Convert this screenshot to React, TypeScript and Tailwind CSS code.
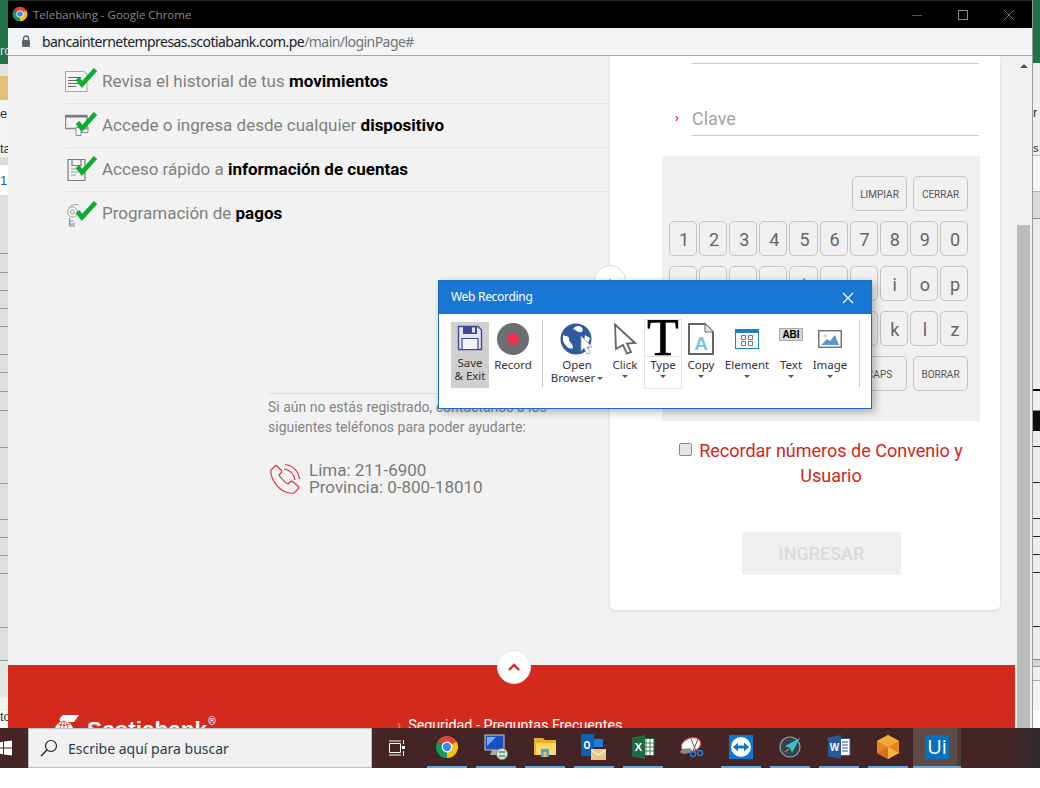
import React from "react";

const Chrome = ({ s }: { s: number }) => (
  <svg width={s} height={s} viewBox="0 0 24 24">
    <path d="M12 12L2.47 6.5A11 11 0 0 1 21.53 6.5Z" fill="#db4437" />
    <path d="M12 12L21.53 6.5A11 11 0 0 1 12 23Z" fill="#f4c20d" />
    <path d="M12 12L12 23A11 11 0 0 1 2.47 6.5Z" fill="#0f9d58" />
    <circle cx="12" cy="12" r="5.4" fill="#fff" />
    <circle cx="12" cy="12" r="4.2" fill="#4285f4" />
  </svg>
);

const Check = () => (
  <path d="M12.500 10.500 L17 16.500 L30.500 1.500" fill="none" stroke="#0aad2e" strokeWidth="4.6" strokeLinejoin="miter" />
);

const ListIcon = ({ n }: { n: number }) => (
  <svg width="33" height="26" viewBox="0 0 33 26" className="shrink-0 mt-[-1px]">
    {n === 0 && (
      <g fill="none" stroke="#8d8d8d" strokeWidth="1">
        <path d="M0.500 3.500H19L22 6V23.500H0.500Z" fill="#f5f5f5" stroke="#b5a68e" />
        <path d="M3 9.500H16M3 12.500H16M3 15.500H14M3 18.500H11" stroke="#666" />
      </g>
    )}
    {n === 1 && (
      <g fill="none" stroke="#8d8d8d" strokeWidth="1">
        <path d="M0.500 3.500H22V16.500H0.500Z" strokeWidth="1.400" />
        <path d="M0.500 4.500H22" stroke="#777" strokeWidth="2" />
        <path d="M11 15.500V23.500H16V15.500Z" fill="#f5f5f5" />
        <path d="M16 20.500H23V15" />
      </g>
    )}
    {n === 2 && (
      <g fill="none" stroke="#807a72" strokeWidth="1.200">
        <path d="M3 3.500H20V24.500H3Z" fill="#f1f1f1" />
        <path d="M7 3.500V9.500H16V3.500" />
        <path d="M6 13H15M6 16H13M6 19H11" stroke="#999" />
      </g>
    )}
    {n === 3 && (
      <g fill="none" stroke="#a9a29a" strokeWidth="1">
        <circle cx="7.500" cy="11" r="5" />
        <path d="M3.500 7Q8 2 14 4" />
        <circle cx="7.500" cy="11" r="2" />
        <path d="M4.500 17V25H10M4.500 20H8.500M4.500 23H10" stroke="#8a8a8a" />
      </g>
    )}
    <Check />
  </svg>
);

const Caret = ({ className = "" }: { className?: string }) => (
  <span className={`inline-block w-0 h-0 border-x-[3px] border-x-transparent border-t-[3px] border-t-[#555] ${className}`} />
);

const RibbonItem = ({
  w,
  icon,
  label,
  caret = true,
  extra = "",
}: {
  w: string;
  icon: React.ReactNode;
  label: React.ReactNode;
  caret?: boolean;
  extra?: string;
}) => (
  <div className={`flex flex-col items-center shrink-0 ${w} ${extra}`}>
    <div className="h-[37px] flex items-center justify-center">{icon}</div>
    <div className="text-center leading-[13px] mt-[1px] whitespace-nowrap">{label}</div>
    {caret && <Caret className="mt-[4px]" />}
  </div>
);

const Key = ({ c }: { c: string }) => (
  <div className="h-[35px] pt-px pl-[2px] flex items-center justify-center rounded-[5px] border border-[#c4c4c4] text-[#666] text-[18px]">
    {c}
  </div>
);

const WideKey = ({ c }: { c: string }) => (
  <div className="w-[55px] h-[35px] pt-[2px] flex items-center justify-center rounded-[5px] border border-[#c4c4c4] text-[#555] text-[10px]">
    {c}
  </div>
);

const LEFT_ROWS = [
  "h-[64px] bg-[#217346]",
  "h-[12px] bg-[#e4e4e4]",
  "h-[24px] bg-[#e3bf78]",
  "h-[57px] bg-[#f4f4f4]",
  "h-[8px] bg-[#dcdcdc]",
  "h-[30px] bg-white",
  "h-[59px] bg-[#dedede] border-b border-[#999]",
  "h-[19px] bg-[#dedede] border-b border-[#999]",
  "h-[18px] bg-[#dedede] border-b border-[#999]",
  "h-[18px] bg-[#dedede] border-b border-[#999]",
  "h-[18px] bg-[#dedede] border-b border-[#999]",
  "h-[28px] bg-[#dedede] border-b border-[#999]",
  "h-[18px] bg-[#dedede] border-b border-[#999]",
  "h-[19px] bg-[#dedede] border-b border-[#999]",
  "h-[19px] bg-[#dedede] border-b border-[#999]",
  "h-[37px] bg-[#dedede] border-b border-[#999]",
  "h-[36px] bg-[#dedede] border-b border-[#999]",
  "h-[36px] bg-[#dedede] border-b border-[#999]",
  "h-[18px] bg-[#dedede] border-b border-[#999]",
  "h-[18px] bg-[#dedede] border-b border-[#999]",
  "h-[18px] bg-[#dedede] border-b border-[#999]",
  "h-[54px] bg-[#dedede] border-b border-[#999]",
  "h-[33px] bg-[#dedede] border-b border-[#999]",
  "h-[37px] bg-[#e6e6e6]",
  "h-[13px] bg-[#f3f3f3]",
];

const RIGHT_ROWS = [
  "h-[63px] bg-[#217346]",
  "h-[93px] bg-[#efefef] border-b border-[#b5b5b5]",
  "h-[36px] bg-[#f5f5f5] border-b border-[#b5b5b5]",
  "h-[27px] bg-[#dcdcdc] border-b border-[#888]",
  "h-[172px] bg-[#ececec] border-b-2 border-black",
  "h-[20px] bg-[#f0f0f0] border-b border-[#888]",
  "h-[20px] bg-[#0c0c0c]",
  "h-[16px] bg-[#ececec] border-b border-[#222]",
  "h-[36px] bg-[#ececec] border-b border-[#222]",
  "h-[36px] bg-[#ececec] border-b border-[#222]",
  "h-[18px] bg-[#ececec] border-b border-[#222]",
  "h-[18px] bg-[#ececec] border-b border-[#222]",
  "h-[18px] bg-[#ececec] border-b border-[#222]",
  "h-[54px] bg-[#ececec] border-b border-[#222]",
  "h-[33px] bg-[#ececec] border-b border-[#888]",
  "h-[7px] bg-[#d4d4d4] border-b border-[#999]",
  "h-[14px] bg-[#efefef] border-b border-[#aaa]",
  "h-[29px] bg-[#f2f2f2]",
];

const TaskIcon = ({
  children,
  on = true,
  active = false,
}: {
  children: React.ReactNode;
  on?: boolean;
  active?: boolean;
}) => (
  <div className={`${active ? "w-[48px] ml-px bg-gradient-to-r from-[#604a48] from-[92%] to-[#4f3a3a] to-[92%]" : "w-[49px]"} h-full flex flex-col items-center shrink-0`}>
    <div className="flex-1 flex items-center justify-center">{children}</div>
    <div className={`h-[2px] ${active ? "w-full" : "w-[40px]"} ${on ? "bg-[#63a7de]" : ""}`} />
  </div>
);

export default function App() {
  return (
    <div className="w-[1040px] h-[788px] flex flex-col bg-white overflow-hidden font-['Roboto',sans-serif]">
      <div className="h-[728px] flex shrink-0 overflow-hidden">
        {/* Excel behind, left */}
        <div className="w-[8px] shrink-0 relative overflow-hidden text-[13px] text-[#333] font-['Liberation_Sans',sans-serif]">
          {LEFT_ROWS.map((c, i) => (
            <div key={i} className={`w-full ${c}`} />
          ))}
          <span className="absolute left-0 top-[44px] text-[#ddd] leading-none">rc</span>
          <span className="absolute left-0 top-[107px] leading-none">e</span>
          <span className="absolute left-0 top-[142px] leading-none">ta</span>
          <span className="absolute left-0 top-[174px] leading-none text-[#2060a0]">1</span>
          <span className="absolute left-0 top-[710px] leading-none">to</span>
        </div>

        {/* Chrome window */}
        <div className="w-[1024px] shrink-0 flex flex-col overflow-hidden border-t border-[#2a2a2a]">
          <div className="h-[27px] shrink-0 bg-black flex items-center text-[#8a8a8a]">
            <div className="ml-[4px] mr-[5px] mt-[-2px]">
              <Chrome s={16} />
            </div>
            <span className="text-[11.5px] font-['Open_Sans',sans-serif]">Telebanking - Google Chrome</span>
            <div className="ml-auto flex items-center h-full">
              <svg width="102" height="14" viewBox="0 0 102 14" className="mr-[18px]">
                <path d="M0 7.500H10" stroke="#555" strokeWidth="1" />
                <rect x="46.500" y="2.500" width="9" height="9" fill="none" stroke="#8a8a8a" />
                <path d="M92 2L102 12M102 2L92 12" stroke="#777" strokeWidth="1" />
              </svg>
            </div>
          </div>
          <div className="h-[28px] shrink-0 bg-[#f1f3f4] border-b border-[#a8a8a8] flex items-center">
            <svg width="10" height="13" viewBox="0 0 10 13" className="ml-[13px] mr-[11px]">
              <path d="M2.500 5V3.500a2.500 2.500 0 0 1 5 0V5" fill="none" stroke="#5f6368" strokeWidth="1.400" />
              <rect x="1" y="5" width="8" height="7" rx="1" fill="#5f6368" />
            </svg>
            <span className="text-[14px] text-[#202124] font-['Noto_Sans',sans-serif] tracking-[-0.55px]">
              bancainternetempresas.scotiabank.com.pe<span className="text-[#6f7479]">/main/loginPage#</span>
            </span>
          </div>

          <div className="flex-1 flex min-h-0">
            {/* Page */}
            <div className="w-[1007px] shrink-0 flex flex-col overflow-hidden bg-[#f2f2f2] relative">
              <div className="h-[609px] shrink-0 flex relative">
                {/* Left column */}
                <div className="w-[602px] shrink-0 pl-[57px] pt-[4px]">
                  {[
                    ["Revisa el historial de tus ", "movimientos"],
                    ["Accede o ingresa desde cualquier ", "dispositivo"],
                    ["Acceso rápido a ", "información de cuentas"],
                    ["Programación de ", "pagos"],
                  ].map(([a, b], i) => (
                    <div
                      key={i}
                      className={`h-[44px] flex items-center ${i < 3 ? "border-b border-[#e6e6e6]" : ""}`}
                    >
                      <ListIcon n={i} />
                      <span className="ml-[4px] text-[17px] text-[#808080]">
                        {a}
                        <strong className="font-bold text-black">{b}</strong>
                      </span>
                    </div>
                  ))}
                  <div className="ml-[203px] mt-[157px] border-t border-[#dedede] pt-[3px]">
                    <p className="text-[14px] leading-[20px] text-[#858585]">
                      Si aún no estás registrado, contáctanos a los
                      <br />
                      siguientes teléfonos para poder ayudarte:
                    </p>
                    <div className="flex items-center mt-[25px]">
                      <svg width="32" height="32" viewBox="0 0 32 32" className="ml-[1px]">
                        <path
                          d="M6 3L2 7C1 12 4 18 9 24C14 29 21 31 25 30L29 26C30 25 30 24 29 23L24 19C23 18 22 18 21 19L19 21C15 19 12 15 10 12L12 10C13 9 13 8 12 7L8 3C7.500 2.500 6.500 2.500 6 3Z"
                          fill="none"
                          stroke="#dd3a3f"
                          strokeWidth="1.200"
                        />
                        <path d="M15 6C21 7 25 11 26 17M16 1.500C24 2.500 29.500 8 30.500 16" fill="none" stroke="#dd3a3f" strokeWidth="1.200" />
                      </svg>
                      <div className="ml-[8px] text-[17px] leading-[17px] text-[#7a7a7a]">
                        <div>Lima: 211-6900</div>
                        <div>Provincia: 0-800-18010</div>
                      </div>
                    </div>
                  </div>
                </div>

                {/* Card */}
                <div className="w-[390px] shrink-0 h-[554px] bg-white rounded-b-[5px] shadow-[0_1px_3px_rgba(0,0,0,0.12)] flex flex-col">
                  <div className="h-[8px] ml-[82px] mr-[21px] border-b border-[#cccccc] shrink-0" />
                  <div className="mt-[40px] h-[32px] ml-[82px] mr-[21px] border-b border-[#cccccc] flex items-center relative shrink-0">
                    <span className="absolute left-[-17px] top-[4px] text-[#e0263a] text-[13px] leading-[20px] font-bold">›</span>
                    <span className="text-[18px] text-[#a3a3a3] leading-[21px] mt-[-3px]">Clave</span>
                  </div>
                  <div className="ml-[52px] w-[318px] mt-[20px] h-[265px] bg-[#f0f0f0] pt-[20px] pl-[7px] pr-[12px] flex flex-col gap-[10px] shrink-0">
                    <div className="flex justify-end gap-[6px]">
                      <WideKey c="LIMPIAR" />
                      <WideKey c="CERRAR" />
                    </div>
                    {["1234567890", "qwertyuiop", "asdfghjklz"].map((row) => (
                      <div key={row} className="grid grid-cols-10 gap-x-[2px]">
                        {row.split("").map((c) => (
                          <Key key={c} c={c} />
                        ))}
                      </div>
                    ))}
                    <div className="flex justify-end gap-[6px]">
                      <WideKey c="CAPS" />
                      <WideKey c="BORRAR" />
                    </div>
                  </div>
                  <div className="mt-[17px] ml-[69px] flex items-start text-[18px] leading-[25px] text-[#d2261b]">
                    <input type="checkbox" readOnly className="appearance-none w-[13px] h-[13px] mt-[5px] rounded-[2px] bg-[#e6e6e6] border border-[#8a8a8a] shrink-0" />
                    <div className="ml-[7px] w-[264px] text-center">Recordar números de Convenio y Usuario</div>
                  </div>
                  <div className="mt-[44px] ml-[132px] w-[159px] h-[43px] rounded-[3px] bg-[#efefef] flex items-center justify-center text-[18px] font-medium text-[#dcdcdc] shrink-0">
                    INGRESAR
                  </div>
                </div>

                {/* Toggle behind popup */}
                <div className="absolute left-[586px] top-[209px] w-[32px] h-[32px] rounded-full bg-white border border-[#dddddd] flex items-center justify-center">
                  <span className="w-[6px] h-[6px] border-l-2 border-t-2 border-[#bbb] rotate-45 mt-[3px]" />
                </div>
              </div>

              {/* Footer */}
              <div className="flex-1 bg-[#d32a1c] relative flex pt-[51px] pl-[47px] overflow-hidden text-white">
                <svg width="24" height="24" viewBox="0 0 24 24" className="shrink-0 mt-[-1px]">
                  <path d="M8 0H24L19 7H14L9 7C5 7 2 5 8 0Z" fill="#fff" />
                  <circle cx="9" cy="15" r="9" fill="#fff" />
                  <path d="M1 15H17M9 6V24M3 9Q9 12 15 9M3 21Q9 18 15 21" fill="none" stroke="#d32a1c" strokeWidth="0.800" />
                  <ellipse cx="9" cy="15" rx="4" ry="9" fill="none" stroke="#d32a1c" strokeWidth="0.800" />
                </svg>
                <span className="ml-[8px] text-[22.500px] font-bold leading-[28px] font-['Liberation_Sans',sans-serif]">Scotiabank</span>
                <span className="text-[10px] leading-none ml-[1px] mt-[1px]">®</span>
                <span className="ml-[181px] text-[#e88b80] text-[14px] leading-[20px] mt-[-1px]">›</span>
                <span className="ml-[7px] text-[14.300px] leading-[20px] mt-[-1px]">Seguridad - Preguntas Frecuentes</span>
              </div>

              {/* Scroll up button */}
              <div className="absolute left-[489px] top-[594px] w-[34px] h-[34px] rounded-full bg-white border border-[#e8e8e8] flex items-center justify-center">
                <svg width="12" height="8" viewBox="0 0 12 8">
                  <path d="M1 7L6 2L11 7" fill="none" stroke="#d32a1c" strokeWidth="2.400" />
                </svg>
              </div>

              {/* Web Recording popup */}
              <div className="absolute left-[430px] top-[224px] w-[434px] h-[129px] bg-white border border-[#1a6fc4] shadow-[3px_3px_8px_rgba(0,0,0,0.28)] flex flex-col font-['Noto_Sans',sans-serif] text-[11.500px] text-[#333]">
                <div className="h-[33px] shrink-0 bg-[#1976d2] flex items-center text-white pl-[12px] pr-[17px]">
                  <span className="text-[12px] tracking-[-0.3px] mt-[-2px]">Web Recording</span>
                  <svg width="12" height="12" viewBox="0 0 12 12" className="ml-auto">
                    <path d="M1 1L11 11M11 1L1 11" stroke="#fff" strokeWidth="1.100" />
                  </svg>
                </div>
                <div className="flex pl-[12px] pt-[6px] items-start">
                  <div className="w-[38px] h-[66px] bg-[#cfcfcf] flex flex-col items-center shrink-0 mt-[2px]">
                    <svg width="26" height="26" viewBox="0 0 26 26" className="mt-[3px]">
                      <path d="M1.500 1.500H21L24.500 5V24.500H1.500Z" fill="#e4e6f2" stroke="#3c4a9c" strokeWidth="1.400" />
                      <path d="M6 1.500H20V9H6Z" fill="#3c4a9c" />
                      <rect x="15" y="2.500" width="3" height="5" fill="#e4e6f2" />
                      <path d="M5 24V13.500H21V24" fill="#f3f4fa" stroke="#3c4a9c" strokeWidth="1.200" />
                    </svg>
                    <div className="text-center leading-[13px] mt-[5px]">
                      Save
                      <br />&amp; Exit
                    </div>
                  </div>
                  <RibbonItem
                    w="w-[48px]"
                    caret={false}
                    icon={
                      <svg width="34" height="34" viewBox="0 0 34 34">
                        <circle cx="17" cy="17" r="16" fill="#6d6e71" />
                        <circle cx="17" cy="17" r="6" fill="#f0304a" />
                      </svg>
                    }
                    label="Record"
                  />
                  <div className="w-px h-[67px] bg-[#c8c8c8] ml-[5px] shrink-0" />
                  <RibbonItem
                    w="w-[50px]"
                    extra="ml-[9px]"
                    caret={false}
                    icon={
                      <svg width="34" height="32" viewBox="0 0 34 32">
                        <circle cx="16" cy="16" r="15.500" fill="#2f5c9f" />
                        <path d="M3 12C6 14 9 12 9 16C9 20 13 20 13 25C10 27 6 24 3 18ZM19 3C23 4 24 8 21 9C18 10 16 7 13 6C15 3 17 3 19 3ZM25 12L30 15L28 21L24 18Z" fill="#fff" />
                        <path d="M21 13L32 24L27 24L30 30L27 31L24 25L21 28Z" fill="#fff" stroke="#9aa0a6" strokeWidth="0.800" />
                      </svg>
                    }
                    label={
                      <>
                        Open
                        <br />
                        Browser
                        <Caret className="ml-[2px] align-middle" />
                      </>
                    }
                  />
                  <RibbonItem
                    w="w-[40px]"
                    extra="ml-[3px]"
                    icon={
                      <svg width="24" height="32" viewBox="0 0 24 32">
                        <path d="M2 1.500L22 20L14 20.500L18 29L14 30.500L10 22L3 26Z" fill="#fff" stroke="#666" strokeWidth="1.800" />
                      </svg>
                    }
                    label="Click"
                  />
                  <div className="w-[38px] h-[70px] border border-[#e3e3e3] flex flex-col items-center shrink-0 ml-[-1px] mt-[-1px]">
                    <div className="h-[37px] w-full border-b border-[#e3e3e3] flex items-center justify-center font-['Liberation_Serif',serif] text-[52px] leading-none text-black overflow-hidden [-webkit-text-stroke:0.6px_#000]">
                      T
                    </div>
                    <div className="text-center leading-[13px] mt-px">Type</div>
                    <Caret className="mt-[4px]" />
                  </div>
                  <RibbonItem
                    w="w-[38px]"
                    icon={
                      <svg width="26" height="32" viewBox="0 0 26 32">
                        <path d="M1 1H17L25 9V31H1Z" fill="#fff" stroke="#666" strokeWidth="2" />
                        <path d="M17 1V9H25" fill="#e8e8e8" stroke="#666" />
                        <text x="13" y="27" textAnchor="middle" fontSize="19" fontWeight="bold" fill="#7fbfe8" fontFamily="Liberation Sans, sans-serif">A</text>
                      </svg>
                    }
                    label="Copy"
                  />
                  <RibbonItem
                    w="w-[54px]"
                    icon={
                      <svg width="24" height="20" viewBox="0 0 24 20">
                        <rect x="0.500" y="0.500" width="23" height="19" fill="#f6fbff" stroke="#1f7fc0" />
                        <rect x="0" y="0" width="24" height="4" fill="#1f7fc0" />
                        <path d="M6.500 6.500h4v4h-4zM13.500 6.500h4v4h-4zM6.500 12.500h4v4h-4zM13.500 12.500h4v4h-4z" fill="none" stroke="#777" />
                      </svg>
                    }
                    label="Element"
                  />
                  <RibbonItem
                    w="w-[34px]"
                    icon={
                      <div className="w-[24px] h-[13px] mt-[-8px] bg-[#d8d8d8] border border-[#aaa] text-[10px] font-bold text-black flex items-center justify-center leading-none font-['Liberation_Sans',sans-serif]">
                        ABI
                      </div>
                    }
                    label="Text"
                  />
                  <RibbonItem
                    w="w-[44px]"
                    icon={
                      <svg width="24" height="18" viewBox="0 0 24 18">
                        <rect x="0.750" y="0.750" width="22.500" height="16.500" fill="#fff" stroke="#777" strokeWidth="1.500" />
                        <path d="M3 15L9 9L12 11L17 5L21 15Z" fill="#5e93cc" />
                        <circle cx="7" cy="6" r="1.500" fill="#f0cf6a" />
                      </svg>
                    }
                    label="Image"
                  />
                  <div className="w-px h-[67px] bg-[#c8c8c8] ml-[7px] shrink-0" />
                </div>
              </div>
            </div>

            {/* Scrollbar */}
            <div className="w-[17px] shrink-0 bg-[#f1f1f1] flex flex-col items-center">
              <span className="mt-[8px] w-0 h-0 border-x-[4px] border-x-transparent border-b-[4px] border-b-[#505050]" />
              <div className="mt-[157px] w-[13px] flex-1 bg-[#bdbdbd]" />
            </div>
          </div>
        </div>

        {/* Excel behind, right */}
        <div className="w-[8px] shrink-0 relative overflow-hidden border-l border-[#999] text-[13px] text-[#333] font-['Liberation_Sans',sans-serif]">
          {RIGHT_ROWS.map((c, i) => (
            <div key={i} className={`w-full ${c}`} />
          ))}
          <span className="absolute left-0 top-[106px] leading-none">r</span>
          <span className="absolute left-0 top-[143px] leading-none text-[11px]">s</span>
        </div>
      </div>

      {/* Taskbar */}
      <div className="h-[40px] shrink-0 bg-[#442424] flex items-stretch overflow-hidden">
        <div className="w-[28px] shrink-0 flex items-center">
          <svg width="12" height="16" viewBox="0 0 12 16">
            <path d="M0 2.300L3 1.800V7.500H0ZM4 1.600L12 0.500V7.500H4ZM0 8.500H3V14.200L0 13.700ZM4 8.500H12V15.500L4 14.400Z" fill="#fff" />
          </svg>
        </div>
        <div className="w-[344px] shrink-0 bg-[#f0f0f0] border border-[#bcbcbc] flex items-center font-['Noto_Sans',sans-serif] text-[14px] text-[#2d3b4d]">
          <svg width="18" height="18" viewBox="0 0 18 18" className="ml-[11px] mr-[10px]">
            <circle cx="11" cy="7" r="5.500" fill="none" stroke="#222" strokeWidth="1.200" />
            <path d="M7 11L1 17" stroke="#222" strokeWidth="1.400" />
          </svg>
          <span>Escribe aquí para buscar</span>
        </div>
        <div className="w-[50px] shrink-0 flex items-center justify-center">
          <svg width="16" height="16" viewBox="0 0 16 16" fill="none" stroke="#fff">
            <path d="M0.500 3.500H11.500V12.500H0.500Z M0 1H12M0 15H12M14.500 0V4M14.500 11V16" />
            <rect x="13" y="6" width="3" height="3" fill="#fff" stroke="none" />
          </svg>
        </div>
        <TaskIcon>
          <Chrome s={24} />
        </TaskIcon>
        <TaskIcon>
          <svg width="24" height="26" viewBox="0 0 24 26">
            <rect x="1" y="1" width="19" height="15" fill="#1a4fc0" stroke="#ccc" />
            <path d="M3 3H12L3 12Z" fill="#6fb1ff" />
            <path d="M8 16H14L16 21H6Z" fill="#aaa" />
            <circle cx="18" cy="20" r="5.500" fill="#dfe8df" stroke="#888" />
            <path d="M15 18H21M15 22H21" stroke="#3a9a4a" strokeWidth="1.500" />
          </svg>
        </TaskIcon>
        <TaskIcon>
          <svg width="22" height="20" viewBox="0 0 22 20">
            <path d="M0 1H9L11 3H22V18H0Z" fill="#e9ad2a" />
            <path d="M2 6H22V18H2Z" fill="#fbd968" />
            <rect x="7" y="12" width="8" height="8" fill="#4aa5e0" />
            <rect x="9.500" y="15" width="3" height="5" fill="#f2c94c" />
          </svg>
        </TaskIcon>
        <TaskIcon>
          <div className="relative w-[26px] h-[26px]">
            <div className="absolute left-0 top-0 w-[13px] h-[22px] bg-[#0f5fb3] text-white text-[10px] font-bold flex items-center justify-center">O</div>
            <div className="absolute left-[13px] top-[5px] w-[9px] h-[8px] bg-[#1c7fd6]" />
            <svg width="15" height="11" viewBox="0 0 15 11" className="absolute left-[10px] top-[15px]">
              <rect width="15" height="11" fill="#edc48a" />
              <path d="M0 1L7.500 6L15 1" fill="none" stroke="#fff" />
            </svg>
          </div>
        </TaskIcon>
        <TaskIcon>
          <svg width="24" height="24" viewBox="0 0 24 24">
            <rect x="12" y="3.500" width="11" height="17" fill="#fff" stroke="#1d6b3e" />
            <path d="M15 4V20M19 4V20M13 8H23M13 12H23M13 16H23" stroke="#1d6b3e" strokeWidth="0.800" />
            <path d="M1 2.500L14 0V24L1 21.500Z" fill="#1d6b3e" />
            <text x="7.500" y="16" textAnchor="middle" fontSize="11" fontWeight="bold" fill="#fff" fontFamily="Liberation Sans, sans-serif">X</text>
          </svg>
        </TaskIcon>
        <TaskIcon on={false}>
          <svg width="24" height="22" viewBox="0 0 24 22">
            <ellipse cx="11" cy="9" rx="10" ry="7" fill="#fff" stroke="#d8414a" strokeWidth="1.200" transform="rotate(-20 11 9)" />
            <ellipse cx="6" cy="15" rx="6" ry="2.500" fill="#888" transform="rotate(-10 6 15)" />
            <path d="M11 3L16 15M18 3L13 15" stroke="#555" />
            <circle cx="13" cy="18" r="2.500" fill="none" stroke="#1c7fd6" strokeWidth="1.500" />
            <circle cx="20" cy="17" r="2.500" fill="none" stroke="#1c7fd6" strokeWidth="1.500" />
          </svg>
        </TaskIcon>
        <TaskIcon>
          <svg width="24" height="24" viewBox="0 0 24 24">
            <rect width="24" height="24" fill="#0e77d4" />
            <circle cx="12" cy="12" r="10" fill="#fff" />
            <path d="M4 12L9 7.500V10.500H15V7.500L20 12L15 16.500V13.500H9V16.500Z" fill="#0e77d4" />
          </svg>
        </TaskIcon>
        <TaskIcon>
          <svg width="22" height="22" viewBox="0 0 22 22">
            <circle cx="11" cy="11" r="10" fill="#33434c" stroke="#9aa4a8" strokeWidth="1.200" />
            <path d="M21 2L6 10L11 12L13 17Z" fill="#39c1c9" />
            <path d="M6 16L10 13" stroke="#c08060" strokeWidth="1.500" />
          </svg>
        </TaskIcon>
        <TaskIcon>
          <svg width="24" height="24" viewBox="0 0 24 24">
            <rect x="12" y="3.500" width="11" height="17" fill="#fff" stroke="#2b579a" />
            <path d="M15 7H21M15 10H21M15 13H21M15 16H21" stroke="#2b579a" strokeWidth="1" />
            <path d="M1 2.500L14 0V24L1 21.500Z" fill="#2b579a" />
            <text x="7.500" y="16" textAnchor="middle" fontSize="10" fontWeight="bold" fill="#fff" fontFamily="Liberation Sans, sans-serif">W</text>
          </svg>
        </TaskIcon>
        <TaskIcon>
          <svg width="22" height="24" viewBox="0 0 22 24">
            <path d="M11 0L22 6V18L11 24L0 18V6Z" fill="#e8861c" />
            <path d="M11 0L22 6L11 12L0 6Z" fill="#f4a93a" />
            <path d="M11 12L22 18L11 24Z" fill="#f4b63c" />
            <path d="M11 12V24L0 18Z" fill="#d9701a" />
          </svg>
        </TaskIcon>
        <TaskIcon active>
          <div className="w-[24px] h-[24px] bg-[#0a6fbd] text-white text-[20px] flex items-center justify-center leading-none font-['Open_Sans',sans-serif]">
            Ui
          </div>
        </TaskIcon>
        <div className="flex-1 bg-gradient-to-r from-[#442424] from-[60%] to-[#2b2a30]" />
      </div>
    </div>
  );
}
